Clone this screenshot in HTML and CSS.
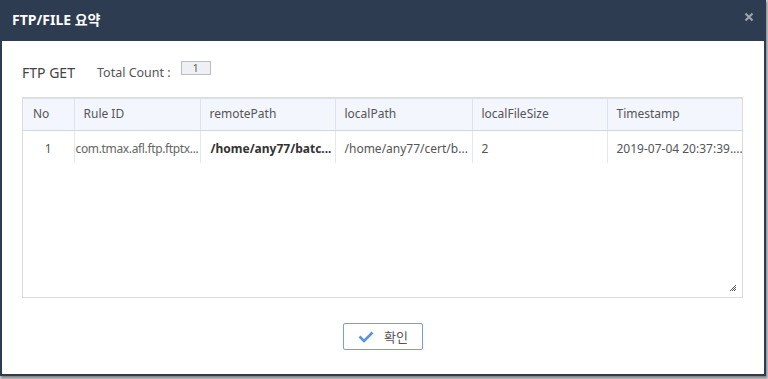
FILE: index.html
```html
<!DOCTYPE html>
<html lang="ko">
<head>
<meta charset="utf-8">
<title>FTP/FILE 요약</title>
<link rel="stylesheet" href="styles.css">
</head>
<body>
<div class="dialog">
  <div class="titlebar">
    <span class="title">FTP/FILE 요약</span>
    <svg class="close" width="10" height="10" viewBox="0 0 10 10"><path d="M1.5 1.5 L8.5 8.5 M8.5 1.5 L1.5 8.5" stroke="#9aa3ae" stroke-width="2.2" fill="none"/></svg>
  </div>
  <div class="body">
    <div class="summary">
      <span class="kind">FTP GET</span>
      <span class="count-label">Total Count :</span>
      <span class="count-box">1</span>
    </div>
    <div class="grid">
      <table>
        <colgroup>
          <col class="c1"><col class="c2"><col class="c3"><col class="c4"><col class="c5"><col class="c6">
        </colgroup>
        <thead>
          <tr><th class="no">No</th><th>Rule ID</th><th>remotePath</th><th>localPath</th><th>localFileSize</th><th>Timestamp</th></tr>
        </thead>
        <tbody>
          <tr>
            <td class="num">1</td>
            <td class="rule">com.tmax.afl.ftp.ftptx...</td>
            <td class="strong">/home/any77/batc...</td>
            <td>/home/any77/cert/b...</td>
            <td>2</td>
            <td>2019-07-04 20:37:39....</td>
          </tr>
        </tbody>
      </table>
      <svg class="resize" width="8" height="8" viewBox="0 0 8 8"><path d="M7 1 L1 7 M7 3 L3 7 M7 5 L5 7" stroke="#555" stroke-width="1" fill="none"/></svg>
    </div>
    <div class="actions">
      <button class="ok">
        <svg width="16" height="12" viewBox="0 0 16 12"><path d="M1.5 5.5 L6 10 L14.5 1.5" stroke="#5b93d8" stroke-width="2.6" fill="none"/></svg>
        <span>확인</span>
      </button>
    </div>
  </div>
</div>
</body>
</html>
```

FILE: styles.css
```css
html, body {
  margin: 0;
  padding: 0;
}
body {
  width: 768px;
  height: 379px;
  background: #c9cacc;
  font-family: "Noto Sans", "Noto Sans CJK KR", sans-serif;
  overflow: hidden;
}
.dialog {
  width: 766px;
  height: 376px;
  box-sizing: border-box;
  background: #2e3c51;
  padding: 0 2px 2px 2px;
  display: flex;
  flex-direction: column;
  box-shadow: 1px 2px 2px rgba(0,0,0,0.35);
}
.titlebar {
  height: 41px;
  flex: none;
  display: flex;
  align-items: center;
  justify-content: space-between;
  padding: 0 10px 0 10px;
}
.title {
  color: #ffffff;
  font-size: 14px;
  font-weight: bold;
  margin-top: -3px;
}
.close {
  margin-top: -8px;
}
.body {
  flex: 1;
  background: #ffffff;
  padding: 0 21px 0 20px;
  display: flex;
  flex-direction: column;
}
.summary {
  height: 56px;
  display: flex;
  align-items: center;
  padding-top: 6px;
  box-sizing: border-box;
}
.kind {
  font-size: 14px;
  color: #444;
  width: 75px;
}
.count-label {
  font-size: 12.5px;
  color: #555;
  margin-right: 10px;
}
.count-box {
  width: 28px;
  height: 12px;
  border: 1px solid #b9bec6;
  background: #eef0f3;
  font-size: 11px;
  line-height: 12px;
  color: #666;
  text-align: center;
  margin-top: -9px;
}
.grid {
  position: relative;
  height: 201px;
  border: 1px solid #dcdcdc;
  box-sizing: border-box;
}
table {
  border-collapse: collapse;
  table-layout: fixed;
  width: 719px;
  font-size: 12px;
}
.c1 { width: 51px; }
.c2 { width: 126px; }
.c3 { width: 135px; }
.c4 { width: 137px; }
.c5 { width: 135px; }
.c6 { width: 135px; }
th {
  height: 28px;
  background: #f3f6fd;
  color: #555;
  font-weight: normal;
  text-align: left;
  padding: 0 0 3px 9px;
  border-right: 1px solid #dce3ee;
  border-bottom: 1px solid #cfd8e5;
  border-top: 1px solid #dce3ee;
}
th:last-child { border-right: none; }
th.no { padding-left: 10px; }
td {
  height: 32px;
  padding: 4px 0 0 9px;
  box-sizing: border-box;
  color: #555;
  white-space: nowrap;
  overflow: hidden;
  border-right: 1px solid #e3e7ee;
}
td:last-child { border-right: none; }
td.num { text-align: center; padding-left: 0; }
td.rule { padding-left: 1px; color: #666; letter-spacing: -0.35px; }
td.strong { font-weight: bold; color: #333; padding-left: 10px; }
.resize {
  position: absolute;
  right: 5px;
  bottom: 5px;
}
.actions {
  flex: 1;
  display: flex;
  justify-content: center;
  align-items: flex-start;
  padding-top: 25px;
}
.ok {
  width: 80px;
  height: 27px;
  border: 1px solid #6ea1e0;
  border-radius: 2px;
  background: #ffffff;
  display: flex;
  align-items: center;
  justify-content: center;
  gap: 10px;
  padding: 0 0 0 1px;
  font-family: "Noto Sans", "Noto Sans CJK KR", sans-serif;
  font-size: 13px;
  color: #555;
}
```
